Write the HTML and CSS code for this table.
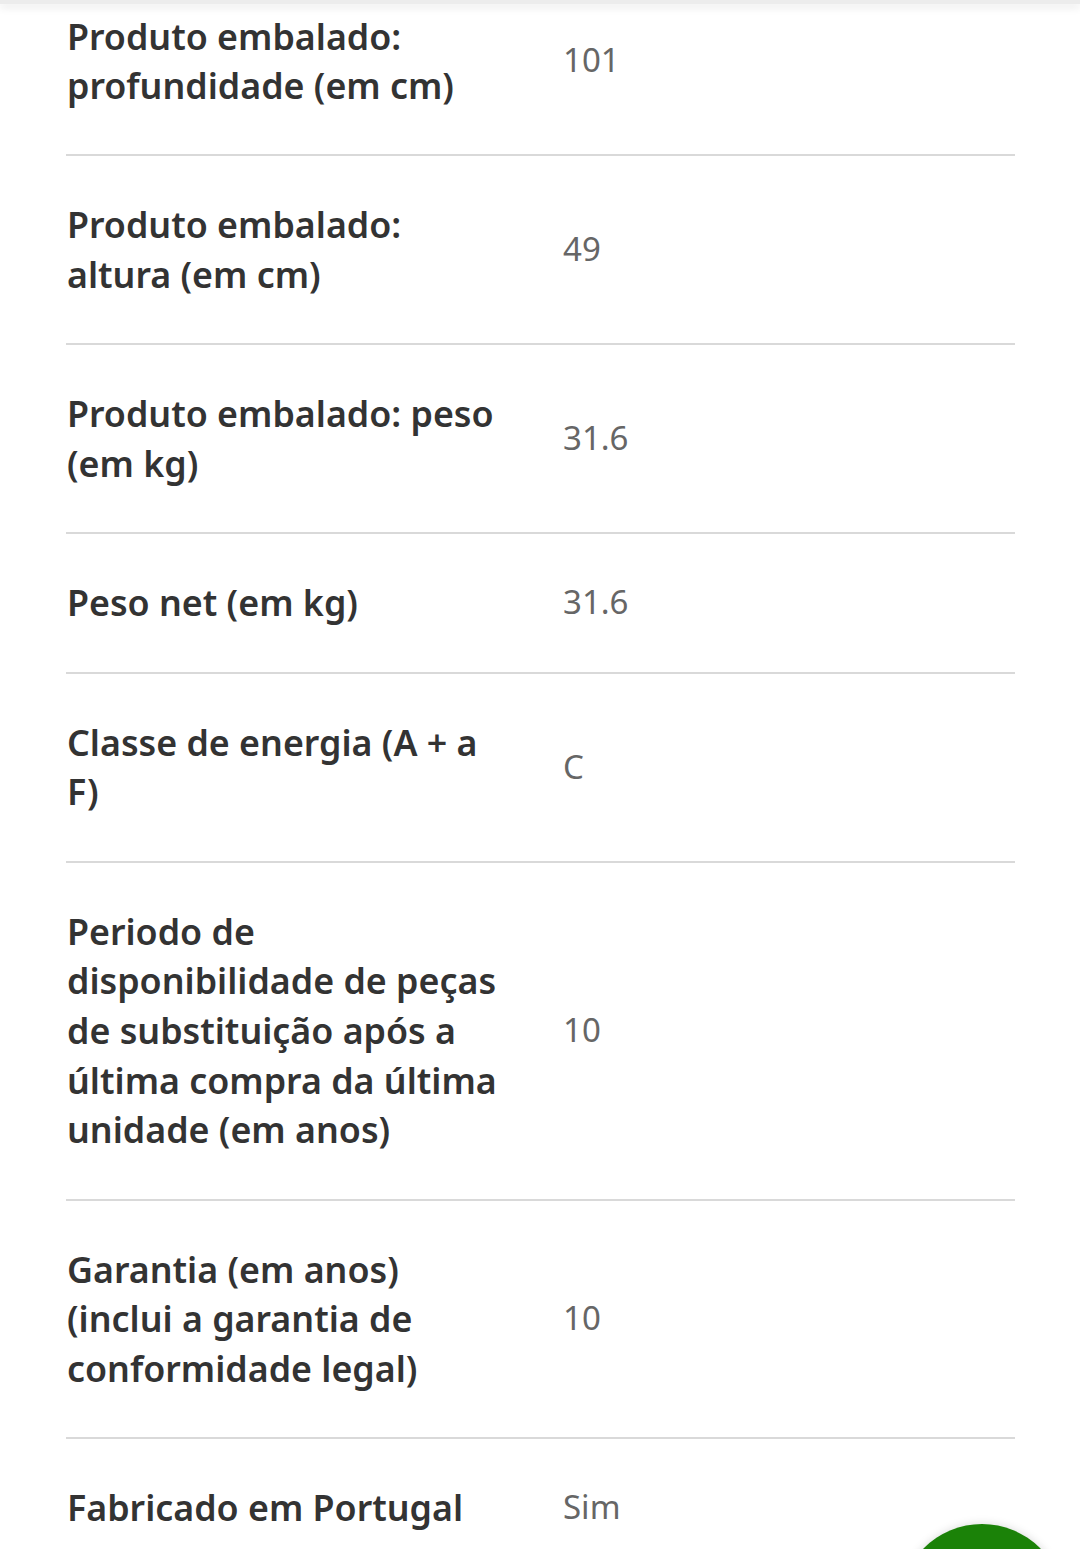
FILE: index.html
```html
<!DOCTYPE html>
<html lang="pt">
<head>
<meta charset="utf-8">
<link rel="stylesheet" href="styles.css">
</head>
<body>
<div class="topbar"></div>
<main class="specs">
  <div class="row">
    <div class="label">Produto embalado: profundidade (em cm)</div>
    <div class="value">101</div>
  </div>
  <div class="row">
    <div class="label">Produto embalado: altura (em cm)</div>
    <div class="value">49</div>
  </div>
  <div class="row">
    <div class="label">Produto embalado: peso (em kg)</div>
    <div class="value">31.6</div>
  </div>
  <div class="row">
    <div class="label">Peso net (em kg)</div>
    <div class="value">31.6</div>
  </div>
  <div class="row">
    <div class="label">Classe de energia (A + a F)</div>
    <div class="value">C</div>
  </div>
  <div class="row">
    <div class="label">Periodo de disponibilidade de peças de substituição após a última compra da última unidade (em anos)</div>
    <div class="value">10</div>
  </div>
  <div class="row">
    <div class="label">Garantia (em anos) (inclui a garantia de conformidade legal)</div>
    <div class="value">10</div>
  </div>
  <div class="row">
    <div class="label">Fabricado em Portugal</div>
    <div class="value">Sim</div>
  </div>
</main>
<div class="fab"></div>
</body>
</html>
```
FILE: styles.css
```css
html, body {
  margin: 0;
  padding: 0;
  background: #ffffff;
  overflow: hidden;
}
body {
  width: 1080px;
  height: 1549px;
  position: relative;
  font-family: "Noto Sans", "Open Sans", sans-serif;
}
.topbar {
  position: absolute;
  top: 0;
  left: 0;
  right: 0;
  height: 4px;
  background: #ececec;
  box-shadow: 0 3px 8px rgba(0,0,0,0.12);
  z-index: 2;
}
.specs {
  margin: -32.5px 65px 0 66px;
}
.row {
  display: grid;
  grid-template-columns: 474px 1fr;
  align-items: center;
  padding: 44px 0 43.8px;
  border-bottom: 2px solid #d9d9d9;
}
.label {
  font-size: 35.8px;
  line-height: 49.6px;
  font-weight: 600;
  color: #333333;
  padding-left: 1px;
  padding-right: 33px;
}
.value {
  font-size: 33px;
  line-height: 49.6px;
  font-weight: 400;
  color: #666666;
  padding-left: 23px;
  position: relative;
  top: -1px;
}
.fab {
  position: absolute;
  left: 900px;
  top: 1524px;
  width: 164px;
  height: 164px;
  border-radius: 50%;
  background: #1b8208;
  box-shadow: 0 0 10px rgba(0,0,0,0.15);
}
```
